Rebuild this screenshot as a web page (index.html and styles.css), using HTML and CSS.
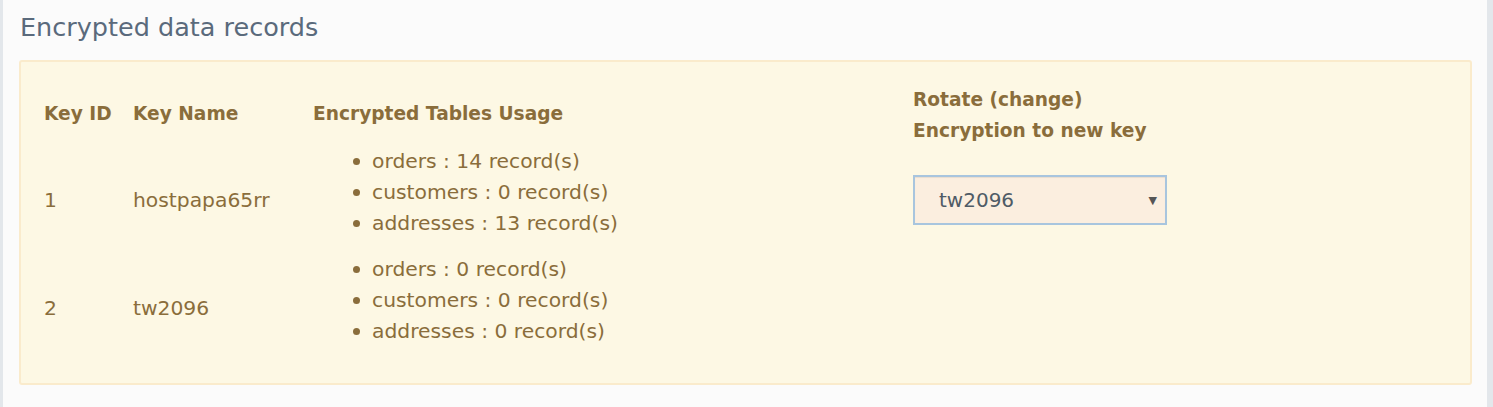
FILE: index.html
```html
<!DOCTYPE html>
<html>
<head>
  <title>Encrypted data records</title>
  <link rel="stylesheet" href="styles.css">
</head>
<body>
  <div class="page">
    <div class="panel">
      <h3 class="panel-title">Encrypted data records</h3>
      <div class="alert">
        <table class="keys-table">
          <thead>
            <tr>
              <th class="col-id">Key ID</th>
              <th class="col-name">Key Name</th>
              <th class="col-usage">Encrypted Tables Usage</th>
              <th class="col-rotate">Rotate (change)<br>Encryption to new key</th>
            </tr>
          </thead>
          <tbody>
            <tr>
              <td>1</td>
              <td>hostpapa65rr</td>
              <td>
                <ul class="usage-list">
                  <li>orders : 14 record(s)</li>
                  <li>customers : 0 record(s)</li>
                  <li>addresses : 13 record(s)</li>
                </ul>
              </td>
              <td>
                <div class="select-box">
                  <span>tw2096</span>
                  <span class="caret">&#9660;</span>
                </div>
              </td>
            </tr>
            <tr>
              <td>2</td>
              <td>tw2096</td>
              <td>
                <ul class="usage-list">
                  <li>orders : 0 record(s)</li>
                  <li>customers : 0 record(s)</li>
                  <li>addresses : 0 record(s)</li>
                </ul>
              </td>
              <td></td>
            </tr>
          </tbody>
        </table>
      </div>
    </div>
  </div>
</body>
</html>
```

FILE: styles.css
```css
html, body {
  margin: 0;
  height: 100%;
}

body {
  background-color: #e3e7eb;
  font-family: "DejaVu Sans", "Open Sans", sans-serif;
  color: #8a6d3b;
}

.page {
  height: 100%;
  padding: 0 6px 0 3px;
  box-sizing: border-box;
}

.panel {
  height: 100%;
  background-color: #fbfbfb;
  padding: 0 15px 0 16px;
  box-sizing: border-box;
  overflow: hidden;
}

.panel-title {
  margin: 0;
  padding: 11px 0 0 1px;
  height: 60px;
  box-sizing: border-box;
  font-size: 25.5px;
  font-weight: normal;
  line-height: 32px;
  color: #5a6a7c;
}

.alert {
  background-color: #fdf8e4;
  border: 2px solid #faebcc;
  border-radius: 3px;
  padding: 22px 15px 21px 15px;
}

.keys-table {
  border-collapse: collapse;
  font-size: 20.3px;
  line-height: 31px;
}

.keys-table th {
  text-align: left;
  font-weight: bold;
  font-size: 18.6px;
  padding: 0 8px;
  vertical-align: middle;
}

.keys-table th.col-id,
.keys-table th.col-name,
.keys-table th.col-usage {
  padding-bottom: 3px;
}

.keys-table td {
  padding: 0 8px;
  vertical-align: middle;
}

.col-id {
  width: 73px;
}

.col-name {
  width: 164px;
}

.col-usage {
  width: 584px;
}

.usage-list {
  margin: 0 0 15px 0;
  padding-left: 59px;
  list-style: none;
}

.usage-list li::before {
  content: "";
  display: inline-block;
  width: 7px;
  height: 7px;
  border-radius: 50%;
  background-color: currentColor;
  margin-left: -19px;
  margin-right: 12px;
  vertical-align: 3px;
}

.select-box {
  width: 254px;
  height: 50px;
  box-sizing: border-box;
  display: flex;
  align-items: center;
  justify-content: space-between;
  padding: 0 8px 0 24px;
  background-color: #fbeedf;
  border: 2px solid #a8c5de;
  box-shadow: inset 0 1px 1px rgba(0, 0, 0, 0.075);
  color: #4f5b66;
  font-size: 20px;
}

.caret {
  font-size: 11px;
  color: #555;
}
```
